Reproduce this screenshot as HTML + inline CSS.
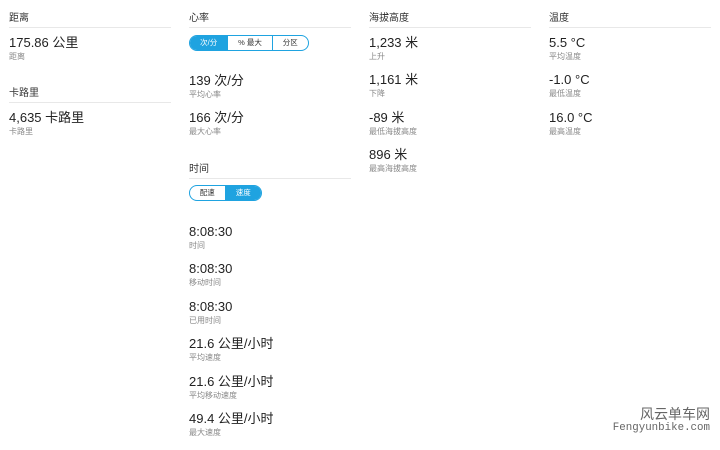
<!DOCTYPE html>
<html><head><meta charset="utf-8"><style>
body{margin:0;width:720px;height:450px;background:#fff;position:relative;overflow:hidden;font-family:"Liberation Sans","Noto Sans CJK SC",sans-serif;color:#222}
.h{position:absolute;font-size:10px;color:#333;width:162px;border-bottom:1px solid #e8e8e8;padding-bottom:2px;line-height:12px}
.v{position:absolute;font-size:13px;line-height:16px;color:#222}
.l{position:absolute;font-size:8px;line-height:10px;color:#888}
.tg{position:absolute;height:14px;border:1px solid #1fa3e0;border-radius:8px;display:flex;overflow:hidden;font-size:7.5px;line-height:14px}
.tg span{text-align:center;color:#333;border-left:1px solid #1fa3e0}
.tg span:first-child{border-left:none}
.tg .a{background:#1fa3e0;color:#fff}
</style></head><body>
<div class="h" style="left:9px;top:13px">距离</div>
<div class="v" style="left:9px;top:35px">175.86 公里</div>
<div class="l" style="left:9px;top:52px">距离</div>
<div class="h" style="left:9px;top:88px">卡路里</div>
<div class="v" style="left:9px;top:110px">4,635 卡路里</div>
<div class="l" style="left:9px;top:127px">卡路里</div>

<div class="h" style="left:189px;top:13px">心率</div>
<div class="tg" style="left:189px;top:35px;width:118px"><span class="a" style="width:38px">次/分</span><span style="width:44px">% 最大</span><span style="width:36px">分区</span></div>
<div class="v" style="left:189px;top:73px">139 次/分</div>
<div class="l" style="left:189px;top:90px">平均心率</div>
<div class="v" style="left:189px;top:110px">166 次/分</div>
<div class="l" style="left:189px;top:127px">最大心率</div>
<div class="h" style="left:189px;top:164px">时间</div>
<div class="tg" style="left:189px;top:185px;width:71px"><span style="width:35px">配速</span><span class="a" style="width:36px">速度</span></div>
<div class="v" style="left:189px;top:224px">8:08:30</div>
<div class="l" style="left:189px;top:241px">时间</div>
<div class="v" style="left:189px;top:261px">8:08:30</div>
<div class="l" style="left:189px;top:278px">移动时间</div>
<div class="v" style="left:189px;top:299px">8:08:30</div>
<div class="l" style="left:189px;top:316px">已用时间</div>
<div class="v" style="left:189px;top:336px">21.6 公里/小时</div>
<div class="l" style="left:189px;top:353px">平均速度</div>
<div class="v" style="left:189px;top:374px">21.6 公里/小时</div>
<div class="l" style="left:189px;top:391px">平均移动速度</div>
<div class="v" style="left:189px;top:411px">49.4 公里/小时</div>
<div class="l" style="left:189px;top:428px">最大速度</div>

<div class="h" style="left:369px;top:13px">海拔高度</div>
<div class="v" style="left:369px;top:35px">1,233 米</div>
<div class="l" style="left:369px;top:52px">上升</div>
<div class="v" style="left:369px;top:72px">1,161 米</div>
<div class="l" style="left:369px;top:89px">下降</div>
<div class="v" style="left:369px;top:110px">-89 米</div>
<div class="l" style="left:369px;top:127px">最低海拔高度</div>
<div class="v" style="left:369px;top:147px">896 米</div>
<div class="l" style="left:369px;top:164px">最高海拔高度</div>

<div class="h" style="left:549px;top:13px">温度</div>
<div class="v" style="left:549px;top:35px">5.5 °C</div>
<div class="l" style="left:549px;top:52px">平均温度</div>
<div class="v" style="left:549px;top:72px">-1.0 °C</div>
<div class="l" style="left:549px;top:89px">最低温度</div>
<div class="v" style="left:549px;top:110px">16.0 °C</div>
<div class="l" style="left:549px;top:127px">最高温度</div>

<div style="position:absolute;right:10px;top:406px;font-size:14px;color:#666;line-height:16px;text-align:right">风云单车网</div>
<div style="position:absolute;right:10px;top:422px;font-size:10.8px;color:#666;font-family:'Liberation Mono',monospace;line-height:12px">Fengyunbike.com</div>
</body></html>
